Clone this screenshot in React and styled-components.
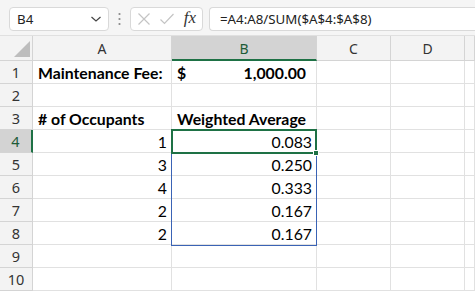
import React from 'react'
import styled, { createGlobalStyle } from 'styled-components'

const GlobalStyle = createGlobalStyle`
  html, body { margin: 0; padding: 0; background: #ffffff; overflow: hidden; }
  * { box-sizing: border-box; }
`

const uiFont = `"Noto Sans", "Open Sans", "DejaVu Sans", sans-serif`
const cellFont = `Lato, "Liberation Sans", sans-serif`

const Page = styled.div`
  width: 475px;
  height: 295px;
  background: #ffffff;
`

const Toolbar = styled.div`
  height: 36px;
  background: #f5f5f5;
  border-bottom: 1px solid #e0e0e0;
  display: flex;
  align-items: flex-start;
  padding: 7px 0 0 9px;
`

const Box = styled.div`
  height: 24px;
  background: #ffffff;
  border: 1px solid #d9d9d9;
  border-radius: 4px;
  display: flex;
  align-items: center;
  font-family: ${uiFont};
  font-size: 13.3px;
  color: #222;
`

const NameBox = styled(Box)`
  width: 100px;
  padding: 0 6px 0 7px;
  justify-content: space-between;
`

const Dots = styled.div`
  width: 21px;
  height: 24px;
  display: flex;
  align-items: center;
  justify-content: center;
`

const FxBox = styled(Box)`
  width: 73px;
  padding: 0 6px;
  justify-content: space-between;
`

const FormulaBox = styled(Box)`
  flex: 1;
  margin-left: 6px;
  padding-left: 10px;
  border-right: none;
  border-radius: 4px 0 0 4px;
`

const Fx = styled.span`
  font-family: "Liberation Serif", "DejaVu Serif", serif;
  font-style: italic;
  font-size: 17px;
  color: #333;
  margin-top: -2px;
`

const SheetWrap = styled.div`
  position: relative;
`

const Grid = styled.div`
  display: grid;
  grid-template-columns: 33px 139px 145px 74px 74px 1fr;
  grid-template-rows: 25px repeat(10, 23px);
`

const ColHead = styled.div`
  background: ${p => (p.$active ? '#d3d3d3' : '#f3f3f3')};
  border-right: 1px solid #d4d4d4;
  border-bottom: ${p => (p.$active ? '2px solid #1e7145' : '1px solid #d4d4d4')};
  display: flex;
  align-items: center;
  justify-content: center;
  font-family: ${uiFont};
  font-size: 14px;
  color: ${p => (p.$active ? '#1e5c38' : '#333')};
  padding-top: ${p => (p.$active ? '1px' : '0')};
`

const Corner = styled.div`
  background: #f3f3f3;
  border-right: 1px solid #d4d4d4;
  border-bottom: 1px solid #d4d4d4;
  display: flex;
  align-items: flex-end;
  justify-content: flex-end;
  padding: 0 2px 3px 0;
`

const RowHead = styled.div`
  background: ${p => (p.$active ? '#d3d3d3' : '#f3f3f3')};
  border-right: ${p => (p.$active ? '2px solid #1e7145' : '1px solid #d4d4d4')};
  border-bottom: 1px solid #d4d4d4;
  display: flex;
  align-items: center;
  justify-content: center;
  font-family: ${uiFont};
  font-size: 14.5px;
  color: ${p => (p.$active ? '#1e5c38' : '#333')};
`

const Cell = styled.div`
  border-right: 1px solid #e1e1e1;
  border-bottom: 1px solid #e1e1e1;
  display: flex;
  align-items: center;
  justify-content: ${p => (p.$align === 'right' ? 'flex-end' : p.$align === 'split' ? 'space-between' : 'flex-start')};
  padding: ${p => (p.$align === 'split' ? '0 10px 0 5px' : '0 4px 0 5px')};
  font-family: ${cellFont};
  font-size: 15.8px;
  font-weight: ${p => (p.$bold ? 700 : 400)};
  color: #000;
  white-space: nowrap;
  overflow: visible;
`

const RangeBox = styled.div`
  position: absolute;
  left: 171px;
  top: 93px;
  width: 146px;
  height: 117px;
  border: 1px solid #3a63b5;
  pointer-events: none;
`

const ActiveBox = styled.div`
  position: absolute;
  left: 171px;
  top: 93px;
  width: 146px;
  height: 25px;
  border: 2px solid #1e7145;
  pointer-events: none;
`

const Handle = styled.div`
  position: absolute;
  left: 313px;
  top: 114px;
  width: 6px;
  height: 6px;
  background: #1e7145;
  border: 1px solid #ffffff;
`

const columns = ['A', 'B', 'C', 'D', '']

const rows = [
  [{ t: 'Maintenance Fee:', bold: true }, { t: ['$', '1,000.00'], bold: true, align: 'split' }],
  [{}, {}],
  [{ t: '# of Occupants', bold: true }, { t: 'Weighted Average', bold: true }],
  [{ t: '1', align: 'right' }, { t: '0.083', align: 'right' }],
  [{ t: '3', align: 'right' }, { t: '0.250', align: 'right' }],
  [{ t: '4', align: 'right' }, { t: '0.333', align: 'right' }],
  [{ t: '2', align: 'right' }, { t: '0.167', align: 'right' }],
  [{ t: '2', align: 'right' }, { t: '0.167', align: 'right' }],
  [{}, {}],
  [{}, {}],
]

const renderCell = (c, key) => (
  <Cell key={key} $bold={c.bold} $align={c.align}>
    {Array.isArray(c.t) ? c.t.map(s => <span key={s}>{s}</span>) : c.t}
  </Cell>
)

export default function App() {
  return (
    <Page>
      <GlobalStyle />
      <Toolbar>
        <NameBox>
          <span>B4</span>
          <svg width="12" height="8" viewBox="0 0 12 8">
            <path d="M1.5 2 L6 6 L10.5 2" fill="none" stroke="#444" strokeWidth="1.2" />
          </svg>
        </NameBox>
        <Dots>
          <svg width="3" height="14" viewBox="0 0 3 14">
            <circle cx="1.5" cy="2" r="1.1" fill="#888" />
            <circle cx="1.5" cy="7" r="1.1" fill="#888" />
            <circle cx="1.5" cy="12" r="1.1" fill="#888" />
          </svg>
        </Dots>
        <FxBox>
          <svg width="14" height="14" viewBox="0 0 14 14">
            <path d="M1.5 1.5 L12.5 12.5 M12.5 1.5 L1.5 12.5" stroke="#c4c4c4" strokeWidth="1.2" />
          </svg>
          <svg width="16" height="14" viewBox="0 0 16 14">
            <path d="M1.5 7.5 L5.5 11.5 L14.5 2" fill="none" stroke="#c4c4c4" strokeWidth="1.2" />
          </svg>
          <Fx>fx</Fx>
        </FxBox>
        <FormulaBox>=A4:A8/SUM($A$4:$A$8)</FormulaBox>
      </Toolbar>
      <SheetWrap>
        <Grid>
          <Corner>
            <svg width="16" height="16" viewBox="0 0 16 16">
              <path d="M16 0 L16 16 L0 16 Z" fill="#bdbdbd" />
            </svg>
          </Corner>
          {columns.map((c, i) => (
            <ColHead key={i} $active={c === 'B'}>{c}</ColHead>
          ))}
          {rows.map((r, i) => (
            <React.Fragment key={i}>
              <RowHead $active={i === 3}>{i + 1}</RowHead>
              {renderCell(r[0], 'a')}
              {renderCell(r[1], 'b')}
              <Cell />
              <Cell />
              <Cell />
            </React.Fragment>
          ))}
        </Grid>
        <RangeBox />
        <ActiveBox />
        <Handle />
      </SheetWrap>
    </Page>
  )
}
